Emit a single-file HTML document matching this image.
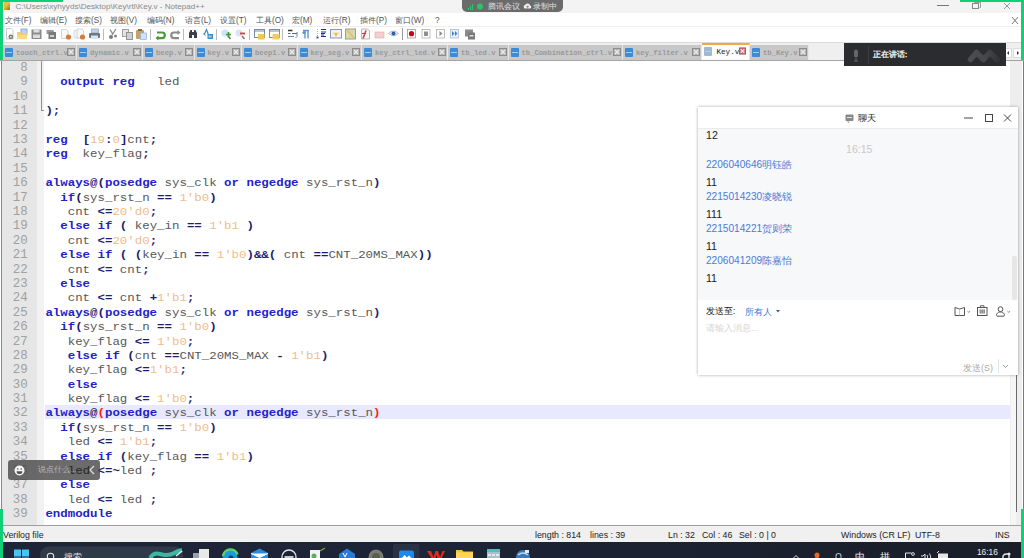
<!DOCTYPE html>
<html><head><meta charset="utf-8"><style>
*{margin:0;padding:0;box-sizing:border-box}
html,body{width:1024px;height:558px;overflow:hidden;background:#fff;position:relative;font-family:"Liberation Sans",sans-serif}
.a{position:absolute}
#title{left:0;top:0;width:1024px;height:13px;background:#f3f3f3}
#title .t{left:15.5px;top:1px;font-size:8.1px;color:#8a8a8a;white-space:nowrap;line-height:11px}
#menu{left:0;top:13px;width:1024px;height:14px;background:#fff;border-bottom:1px solid #eeeeee}
#menu span{position:absolute;top:2.3px;font-size:8.2px;color:#555;line-height:12px;white-space:nowrap}
#tool{left:0;top:27px;width:1024px;height:15px;background:#fff}
#tabbar{left:0;top:42px;width:1024px;height:19px;background:#efefef;border-top:1px solid #dadada;border-bottom:1px solid #a4a4a4}
.tab{position:absolute;top:2px;height:15px;background:#c8c8c8;border-right:1px solid #e6e6e6}
.tab.act{background:#fcfcfc;top:0px;height:17px;border-top:2px solid #f0a848}
.tab span{position:absolute;left:13px;top:3.4px;font-family:"Liberation Mono",monospace;font-size:7.2px;font-weight:bold;color:#999;line-height:11px;white-space:nowrap}
.tab.act span{color:#222;top:2.4px;font-weight:normal;left:15px;font-size:7.6px}
.fi{position:absolute;left:2px;top:3px;width:8px;height:9px;background:#3c8ad8;border-radius:1px}
.fi:after{content:"";position:absolute;left:1px;top:4px;width:6px;height:1px;background:#a8d0f4}
.tab.act .fi{background:#a0b8d0;top:2px}
.cx{position:absolute;right:1px;top:3px;width:8px;height:8px}
.tab.act .cx{top:2px;right:3px;width:7px;height:8px}
#editor{left:0;top:61px;width:1024px;height:464px;background:#fff;overflow:hidden}
#margin{left:1px;top:0;width:36px;height:464px;background:#e6e6e6;border-left:1px solid #888}
#fold{left:37px;top:0;width:7px;height:464px;background:#f2f2f2}
.ln,.num{position:absolute;height:14.39px;line-height:14.39px;font-family:"Liberation Mono",monospace;font-size:12.42px;white-space:pre}
.ln{left:45.4px;color:#575757;width:965px}
.cur{position:absolute;left:45px;width:964.5px;height:14.1px;background:#e8e8ff}
.ln{transform:scaleY(.86);transform-origin:0 10.48px}
.num{transform:translateY(-.4px)}
.num{left:0;width:25.6px;text-align:right;color:#a0a0a0}
.ln k{color:#2222c8;font-weight:bold}
.ln o{color:#1c1c70;font-weight:bold}
.ln n{color:#efbc8e}
.ln b{color:#ff2000;font-weight:bold}
#status{left:0;top:525px;width:1024px;height:17px;background:#f0f0f0;border-top:1px solid #a0a0a0}
#status span{position:absolute;top:2.5px;font-size:8.8px;color:#222;line-height:12px;white-space:nowrap}
#taskbar{left:0;top:542px;width:1024px;height:16px;background:linear-gradient(90deg,#1f2538 0%,#1c2436 40%,#1b2130 70%,#1a1e28 100%)}
.ticon{left:4px;top:2px;width:6px;height:8px;background:linear-gradient(135deg,#e8c040 40%,#a07020)}
#chat{left:698px;top:107px;width:320px;height:268px;background:#fff;box-shadow:0 0 3px rgba(0,0,0,.35)}
#chattitle{left:0;top:0;width:320px;height:22px;background:#fff;border-bottom:1px solid #ececec}
#msgs{left:0;top:22px;width:320px;height:171px;background:#f7f8fa}
.m{position:absolute;left:8px;font-size:10.6px;line-height:12px;white-space:nowrap}
.m.bl{color:#4a7ad8;font-size:10.1px}
#inp{left:0;top:193px;width:320px;height:75px;background:#fff}
#speak{left:843.5px;top:42.5px;width:162.5px;height:23.3px;background:#2a2c2f}
#pill{left:462px;top:0;width:101px;height:12px;background:#6b6b6b;border-radius:0 0 5px 5px}
#say{left:8px;top:460px;width:92px;height:19.5px;background:rgba(75,75,75,.82);border-radius:3px}

</style></head><body>
<div id="title" class="a"><div class="a ticon"></div><div class="a t">C:\Users\xyhyyds\Desktop\Key\rtl\Key.v - Notepad++</div>
<svg class="a" style="left:930px;top:0" width="90" height="13" viewBox="0 0 90 13"><path d="M7 5.5h12" stroke="#777" stroke-width="1"/><rect x="42.5" y="3.5" width="6" height="5" fill="none" stroke="#888" stroke-width="1"/><path d="M44.5 3.5v-1h6v5h-1" fill="none" stroke="#888" stroke-width=".8"/><path d="M74 3l6 6M80 3l-6 6" stroke="#999" stroke-width="1"/></svg>
</div>
<div id="menu" class="a">
<span style="left:5px">文件(F)</span><span style="left:40px">编辑(E)</span><span style="left:75px">搜索(S)</span><span style="left:110px">视图(V)</span><span style="left:147px">编码(N)</span><span style="left:185px">语言(L)</span><span style="left:220px">设置(T)</span><span style="left:256px">工具(O)</span><span style="left:292px">宏(M)</span><span style="left:323px">运行(R)</span><span style="left:360px">插件(P)</span><span style="left:395px">窗口(W)</span><span style="left:435px">?</span>
<svg class="a" style="left:1010px;top:3px" width="10" height="9"><path d="M2 1l6 7M8 1l-6 7" stroke="#777" stroke-width="1"/></svg>
</div>
<div id="tool" class="a"><svg class="a" style="left:0;top:-27px" width="480" height="44" viewBox="0 0 480 44">
<!-- new -->
<path d="M6.5 28.5h4.5l2 2v8.5h-6.5z" fill="#fff" stroke="#c8c8c8" stroke-width="1"/>
<circle cx="10.8" cy="36.8" r="2.3" fill="#6a7a5a"/><circle cx="10.8" cy="36.8" r="1" fill="#dfe8d0"/>
<!-- open -->
<rect x="21" y="29" width="6" height="6" fill="#b8d4f0" stroke="#7aa0d0" stroke-width=".8"/>
<path d="M17 32h4l1 1h5v6h-10z" fill="#f0cc70"/><path d="M17 35h10v4h-10z" fill="#f6d98a"/>
<!-- save -->
<rect x="31.5" y="29.5" width="10" height="9.5" fill="#8a8a8a"/><rect x="33.5" y="29.5" width="6" height="3" fill="#e0e0e0"/><rect x="33" y="34.5" width="7" height="3.5" fill="#dcdcdc"/>
<!-- save all -->
<path d="M46.5 30h6.5l1 1v3h-7.5z" fill="#9a9a9a"/><path d="M48.5 32h7.5v7h-7.5z" fill="#7a7a7a"/><rect x="50" y="35" width="4" height="2" fill="#cfcfcf"/>
<!-- close -->
<path d="M61.5 29.5h5l1.5 1.5v7.5h-6.5z" fill="#f8f8f8" stroke="#ccc" stroke-width=".8"/><circle cx="68.5" cy="37" r="2.6" fill="#d67a3a"/>
<!-- close all -->
<path d="M74 30.5h5v7.5h-5z" fill="#eef4fa" stroke="#cfd8e0" stroke-width=".8"/><path d="M77 29h5l1.5 1.5v7.5h-6.5z" fill="#f8f8f8" stroke="#ccc" stroke-width=".8"/><circle cx="82.5" cy="37" r="2.6" fill="#d67a3a"/>
<!-- print -->
<rect x="91.5" y="29" width="7" height="4" fill="#c0d4e6" stroke="#8aa0b8" stroke-width=".7"/><rect x="89" y="33" width="11" height="5" rx="1" fill="#6c7886"/><rect x="91" y="35.5" width="7" height="3.5" fill="#d8e4ef"/>
<path d="M103.5 29v11" stroke="#bbb" stroke-width="1"/>
<!-- cut -->
<path d="M116 29l-4 6M110 29.5l3 5" stroke="#888" stroke-width="1.3"/><circle cx="111" cy="37" r="2" fill="#7a7a7a"/><circle cx="115.5" cy="36" r="1.6" fill="#8a8a8a"/>
<!-- copy -->
<rect x="122.5" y="29.5" width="6" height="7" fill="#e4e4e4" stroke="#999" stroke-width=".9"/><rect x="126.5" y="32.5" width="6" height="7" fill="#d0d0d0" stroke="#8a8a8a" stroke-width=".9"/>
<!-- paste -->
<rect x="136" y="30" width="8" height="9" rx="1" fill="#c8a060"/><rect x="138" y="29" width="4" height="2" fill="#8a6a3a"/><rect x="140.5" y="33" width="6" height="6.5" fill="#cfe2f6" stroke="#8ab0d8" stroke-width=".7"/>
<path d="M150.5 29v11" stroke="#bbb" stroke-width="1"/>
<!-- undo -->
<path d="M157 32.5h5a2.8 2.8 0 0 1 0 5.6h-5" fill="none" stroke="#4a9a3a" stroke-width="2.2"/><path d="M155.5 38l3-2.5v5z" fill="#4a9a3a"/>
<!-- redo -->
<path d="M179 32.5h-5a2.8 2.8 0 0 0 0 5.6h5" fill="none" stroke="#8a8a8a" stroke-width="2.2"/><path d="M180.5 32.5l-3-2.5v5z" fill="#8a8a8a"/>
<path d="M183.5 29v11" stroke="#bbb" stroke-width="1"/>
<!-- find -->
<path d="M189 33l1.5-3h1.5v8h-3z M197 33l-1.5-3h-1.5v8h3z" fill="#3a3f48"/><rect x="191.5" y="32" width="3" height="3" fill="#3a3f48"/>
<!-- replace -->
<path d="M204 35l2.5-5.5 2 5.5" fill="none" stroke="#3a8ac8" stroke-width="1.2"/><rect x="207.5" y="34" width="5.5" height="5" fill="#3a90d0"/><rect x="208.5" y="35.5" width="3" height="2" fill="#a0d0f0"/><path d="M203.5 33.5l2 1.5" stroke="#3a9a6a" stroke-width="1"/>
<path d="M216.5 29v11" stroke="#bbb" stroke-width="1"/>
<!-- zoom in -->
<circle cx="225" cy="33" r="3.6" fill="#cfe4f4"/><path d="M228 36l2.5 3" stroke="#4a7a4a" stroke-width="1.4"/><path d="M226 34.5h5M228.5 32v5" stroke="#3a9a3a" stroke-width="1.6"/>
<!-- zoom out -->
<circle cx="239" cy="33" r="3.6" fill="#d6e6f4"/><path d="M242 36l2.5 3" stroke="#8a6a6a" stroke-width="1.4"/><path d="M240 33.5h5" stroke="#d84a4a" stroke-width="2"/>
<path d="M249.5 29v11" stroke="#bbb" stroke-width="1"/>
<!-- sync v -->
<rect x="254.5" y="29.5" width="10" height="8" fill="#fff" stroke="#7a88a8" stroke-width="1"/><path d="M254.5 31h10" stroke="#7a88a8" stroke-width="1"/><rect x="258" y="34" width="6.5" height="5.5" fill="#f0c850"/>
<!-- sync h -->
<rect x="269.5" y="29.5" width="10" height="8" fill="#fff" stroke="#7a88a8" stroke-width="1"/><path d="M269.5 31h10" stroke="#7a88a8" stroke-width="1"/><rect x="272.5" y="34" width="7" height="5.5" fill="#f2cc60"/>
<path d="M282.5 29v11" stroke="#bbb" stroke-width="1"/>
<!-- wrap -->
<path d="M288 30.5h4.5" stroke="#333" stroke-width="1.5"/><path d="M288 33.5h2.5M292 33.5h5" stroke="#555" stroke-width=".9"/><path d="M288 36.5h6" stroke="#6a8ab0" stroke-width="1"/><path d="M297 32v4.5l-1.5 1.5" fill="none" stroke="#6a8ab0" stroke-width="1"/>
<!-- pilcrow -->
<path d="M305 30.5v8M308 30.5v8" stroke="#5a94d0" stroke-width="1.4"/><path d="M303 30.5h6" stroke="#5a94d0" stroke-width="1.4"/><circle cx="304" cy="32.5" r="1.6" fill="#5a94d0"/>
<!-- indent guide -->
<path d="M317.5 29v10" stroke="#9090d0" stroke-width=".8" stroke-dasharray="1 1"/><path d="M321 29.5h5M321 32h5M321 33.5h4M321 35h3M321 36.5h5" stroke="#1a2ad0" stroke-width="1"/><rect x="316.5" y="36.5" width="2" height="2" fill="#4a4aa0"/>
<!-- udl -->
<rect x="330.5" y="29.5" width="11" height="8.5" fill="#f0f0f8" stroke="#8898b8" stroke-width="1"/><rect x="332" y="32" width="8" height="2" fill="#f4e8c8"/><path d="M334 33l2 4 2-4z" fill="#e8c040"/>
<!-- doc map -->
<rect x="345.5" y="29" width="10" height="10" fill="#d8d8a8" stroke="#9aa090" stroke-width="1"/><path d="M347 30l7 8" stroke="#d8c070" stroke-width="1.5"/>
<!-- function list -->
<path d="M361.5 29h6l2 2v8h-8z" fill="#fcf4f4" stroke="#aaa" stroke-width=".8"/><path d="M366 30.5l-3 8" stroke="#b84a4a" stroke-width="1.6"/><path d="M362 33.5h4" stroke="#b84a4a" stroke-width="1"/>
<!-- folder -->
<rect x="375" y="32" width="9" height="6" fill="#f2d0d0" stroke="#e0a8a8" stroke-width=".6"/>
<!-- monitor eye -->
<path d="M388.5 33.5q5-5 10 0q-5 4.5-10 0z" fill="#e8eef4" stroke="#9aa8b8" stroke-width=".7"/><circle cx="393.5" cy="33.5" r="2" fill="#3a5aa8"/>
<path d="M402.5 28v12" stroke="#999" stroke-width="1"/>
<!-- record -->
<rect x="407.5" y="29.5" width="8" height="8.5" fill="#fff" stroke="#999" stroke-width=".8"/><circle cx="411.5" cy="33.7" r="2.6" fill="#c8001a"/>
<!-- stop -->
<rect x="422" y="29.5" width="8" height="8.5" fill="#fff" stroke="#b0b0b0" stroke-width=".8"/><rect x="424" y="31.5" width="4" height="4.5" fill="#909090"/>
<!-- play -->
<rect x="436.5" y="29.5" width="8" height="8.5" fill="#fff" stroke="#b0b0b0" stroke-width=".8"/><path d="M439.5 31v5l3-2.5z" fill="#888"/>
<!-- play multi -->
<rect x="450.5" y="29.5" width="8" height="8.5" fill="#e8f0fa" stroke="#b0b8c8" stroke-width=".8"/><path d="M452 31v5l2.5-2.5z M455 31v5l2.5-2.5z" fill="#3a7ad8"/>
<!-- save macro -->
<rect x="465" y="29.5" width="8" height="7" fill="#8c8c8c"/><rect x="468" y="32.5" width="7" height="7" fill="#7a7a7a"/><rect x="469.5" y="35" width="4" height="1.5" fill="#ddd"/>
</svg>
</div>
<div id="tabbar" class="a"><div class="tab" style="left:3px;width:74px"><i class="fi"></i><span>touch_ctrl.v</span><svg class="cx" width="8" height="8" viewBox="0 0 8 8"><rect x=".5" y=".5" width="7" height="7" fill="#b4b4b4" stroke="#8c8c8c" stroke-width="1"/><path d="M2 2l4 4M6 2l-4 4" stroke="#ececec" stroke-width="1.2"/></svg></div>
<div class="tab" style="left:77px;width:66px"><i class="fi"></i><span>dynamic.v</span><svg class="cx" width="8" height="8" viewBox="0 0 8 8"><rect x=".5" y=".5" width="7" height="7" fill="#b4b4b4" stroke="#8c8c8c" stroke-width="1"/><path d="M2 2l4 4M6 2l-4 4" stroke="#ececec" stroke-width="1.2"/></svg></div>
<div class="tab" style="left:143px;width:51.5px"><i class="fi"></i><span>beep.v</span><svg class="cx" width="8" height="8" viewBox="0 0 8 8"><rect x=".5" y=".5" width="7" height="7" fill="#b4b4b4" stroke="#8c8c8c" stroke-width="1"/><path d="M2 2l4 4M6 2l-4 4" stroke="#ececec" stroke-width="1.2"/></svg></div>
<div class="tab" style="left:194.5px;width:47.5px"><i class="fi"></i><span>key.v</span><svg class="cx" width="8" height="8" viewBox="0 0 8 8"><rect x=".5" y=".5" width="7" height="7" fill="#b4b4b4" stroke="#8c8c8c" stroke-width="1"/><path d="M2 2l4 4M6 2l-4 4" stroke="#ececec" stroke-width="1.2"/></svg></div>
<div class="tab" style="left:242px;width:55.5px"><i class="fi"></i><span>beep1.v</span><svg class="cx" width="8" height="8" viewBox="0 0 8 8"><rect x=".5" y=".5" width="7" height="7" fill="#b4b4b4" stroke="#8c8c8c" stroke-width="1"/><path d="M2 2l4 4M6 2l-4 4" stroke="#ececec" stroke-width="1.2"/></svg></div>
<div class="tab" style="left:297.5px;width:64.5px"><i class="fi"></i><span>key_seg.v</span><svg class="cx" width="8" height="8" viewBox="0 0 8 8"><rect x=".5" y=".5" width="7" height="7" fill="#b4b4b4" stroke="#8c8c8c" stroke-width="1"/><path d="M2 2l4 4M6 2l-4 4" stroke="#ececec" stroke-width="1.2"/></svg></div>
<div class="tab" style="left:362px;width:86px"><i class="fi"></i><span>key_ctrl_led.v</span><svg class="cx" width="8" height="8" viewBox="0 0 8 8"><rect x=".5" y=".5" width="7" height="7" fill="#b4b4b4" stroke="#8c8c8c" stroke-width="1"/><path d="M2 2l4 4M6 2l-4 4" stroke="#ececec" stroke-width="1.2"/></svg></div>
<div class="tab" style="left:448px;width:60.5px"><i class="fi"></i><span>tb_led.v</span><svg class="cx" width="8" height="8" viewBox="0 0 8 8"><rect x=".5" y=".5" width="7" height="7" fill="#b4b4b4" stroke="#8c8c8c" stroke-width="1"/><path d="M2 2l4 4M6 2l-4 4" stroke="#ececec" stroke-width="1.2"/></svg></div>
<div class="tab" style="left:508.5px;width:114.5px"><i class="fi"></i><span>tb_Combination_ctrl.v</span><svg class="cx" width="8" height="8" viewBox="0 0 8 8"><rect x=".5" y=".5" width="7" height="7" fill="#b4b4b4" stroke="#8c8c8c" stroke-width="1"/><path d="M2 2l4 4M6 2l-4 4" stroke="#ececec" stroke-width="1.2"/></svg></div>
<div class="tab" style="left:623px;width:78.5px"><i class="fi"></i><span>key_filter.v</span><svg class="cx" width="8" height="8" viewBox="0 0 8 8"><rect x=".5" y=".5" width="7" height="7" fill="#b4b4b4" stroke="#8c8c8c" stroke-width="1"/><path d="M2 2l4 4M6 2l-4 4" stroke="#ececec" stroke-width="1.2"/></svg></div>
<div class="tab act" style="left:701.5px;width:48.5px"><i class="fi"></i><span>Key.v</span><svg class="cx" width="8" height="8" viewBox="0 0 8 8"><rect x=".5" y=".5" width="7" height="7" fill="#d87888" stroke="#a04858" stroke-width="1"/><path d="M2 2l4 4M6 2l-4 4" stroke="#fff" stroke-width="1.2"/></svg></div>
<div class="tab" style="left:750px;width:59px"><i class="fi"></i><span>tb_Key.v</span><svg class="cx" width="8" height="8" viewBox="0 0 8 8"><rect x=".5" y=".5" width="7" height="7" fill="#b4b4b4" stroke="#8c8c8c" stroke-width="1"/><path d="M2 2l4 4M6 2l-4 4" stroke="#ececec" stroke-width="1.2"/></svg></div>
<div class="a" style="left:1003px;top:5px;width:9px;height:10px;background:#fff;border:1px solid #ddd"></div><div class="a" style="left:1013px;top:5px;width:9px;height:10px;background:#fff;border:1px solid #ddd"></div>
<svg class="a" style="left:1003px;top:5px" width="20" height="10"><path d="M6 3l-2 2 2 2z M14 3l2 2-2 2z" fill="#333"/></svg>
</div>
<div id="editor" class="a">
<div id="margin" class="a"><div class="num" style="top:0.10px">8</div>
<div class="num" style="top:14.49px">9</div>
<div class="num" style="top:28.88px">10</div>
<div class="num" style="top:43.27px">11</div>
<div class="num" style="top:57.66px">12</div>
<div class="num" style="top:72.05px">13</div>
<div class="num" style="top:86.44px">14</div>
<div class="num" style="top:100.83px">15</div>
<div class="num" style="top:115.22px">16</div>
<div class="num" style="top:129.61px">17</div>
<div class="num" style="top:144.00px">18</div>
<div class="num" style="top:158.39px">19</div>
<div class="num" style="top:172.78px">20</div>
<div class="num" style="top:187.17px">21</div>
<div class="num" style="top:201.56px">22</div>
<div class="num" style="top:215.95px">23</div>
<div class="num" style="top:230.34px">24</div>
<div class="num" style="top:244.73px">25</div>
<div class="num" style="top:259.12px">26</div>
<div class="num" style="top:273.51px">27</div>
<div class="num" style="top:287.90px">28</div>
<div class="num" style="top:302.29px">29</div>
<div class="num" style="top:316.68px">30</div>
<div class="num" style="top:331.07px">31</div>
<div class="num" style="top:345.46px">32</div>
<div class="num" style="top:359.85px">33</div>
<div class="num" style="top:374.24px">34</div>
<div class="num" style="top:388.63px">35</div>
<div class="num" style="top:403.02px">36</div>
<div class="num" style="top:417.41px">37</div>
<div class="num" style="top:431.80px">38</div>
<div class="num" style="top:446.19px">39</div></div>
<div id="fold" class="a"></div>
<div class="a" style="left:41px;top:0;width:1px;height:49px;background:#909090"></div>
<div class="a" style="left:41px;top:48.5px;width:3px;height:1px;background:#909090"></div>
<div class="ln" style="top:0.10px"></div>
<div class="ln" style="top:14.49px">  <k>output</k> <k>reg</k>   led</div>
<div class="ln" style="top:28.88px"></div>
<div class="ln" style="top:43.27px"><o>);</o></div>
<div class="ln" style="top:57.66px"></div>
<div class="ln" style="top:72.05px"><k>reg</k>  <o>[</o><n>19</n><o>:</o><n>0</n><o>]</o>cnt<o>;</o></div>
<div class="ln" style="top:86.44px"><k>reg</k>  key_flag<o>;</o></div>
<div class="ln" style="top:100.83px"></div>
<div class="ln" style="top:115.22px"><k>always</k><o>@(</o><k>posedge</k> sys_clk <k>or</k> <k>negedge</k> sys_rst_n<o>)</o></div>
<div class="ln" style="top:129.61px">  <k>if</k><o>(</o>sys_rst_n <o>==</o> <n>1'b0</n><o>)</o></div>
<div class="ln" style="top:144.00px">   cnt <o>&lt;=</o><n>20'd0</n><o>;</o></div>
<div class="ln" style="top:158.39px">  <k>else</k> <k>if</k> <o>(</o> key_in <o>==</o> <n>1'b1</n> <o>)</o></div>
<div class="ln" style="top:172.78px">   cnt <o>&lt;=</o><n>20'd0</n><o>;</o></div>
<div class="ln" style="top:187.17px">  <k>else</k> <k>if</k> <o>(</o> <o>(</o>key_in <o>==</o> <n>1'b0</n><o>)&amp;&amp;(</o> cnt <o>==</o>CNT_20MS_MAX<o>))</o></div>
<div class="ln" style="top:201.56px">   cnt <o>&lt;=</o> cnt<o>;</o></div>
<div class="ln" style="top:215.95px">  <k>else</k></div>
<div class="ln" style="top:230.34px">   cnt <o>&lt;=</o> cnt <o>+</o><n>1'b1</n><o>;</o></div>
<div class="ln" style="top:244.73px"><k>always</k><o>@(</o><k>posedge</k> sys_clk <k>or</k> <k>negedge</k> sys_rst_n<o>)</o></div>
<div class="ln" style="top:259.12px">  <k>if</k><o>(</o>sys_rst_n <o>==</o> <n>1'b0</n><o>)</o></div>
<div class="ln" style="top:273.51px">   key_flag <o>&lt;=</o> <n>1'b0</n><o>;</o></div>
<div class="ln" style="top:287.90px">   <k>else</k> <k>if</k> <o>(</o>cnt <o>==</o>CNT_20MS_MAX <o>-</o> <n>1'b1</n><o>)</o></div>
<div class="ln" style="top:302.29px">   key_flag <o>&lt;=</o><n>1'b1</n><o>;</o></div>
<div class="ln" style="top:316.68px">   <k>else</k></div>
<div class="ln" style="top:331.07px">   key_flag <o>&lt;=</o> <n>1'b0</n><o>;</o></div>
<div class="cur" style="top:344.1px"></div>
<div class="ln" style="top:345.46px"><k>always</k><o>@</o><b>(</b><k>posedge</k> sys_clk <k>or</k> <k>negedge</k> sys_rst_n<b>)</b></div>
<div class="ln" style="top:359.85px">  <k>if</k><o>(</o>sys_rst_n <o>==</o> <n>1'b0</n><o>)</o></div>
<div class="ln" style="top:374.24px">   led <o>&lt;=</o> <n>1'b1</n><o>;</o></div>
<div class="ln" style="top:388.63px">  <k>else</k> <k>if</k> <o>(</o>key_flag <o>==</o> <n>1'b1</n><o>)</o></div>
<div class="ln" style="top:403.02px">   led <o>&lt;=~</o>led <o>;</o></div>
<div class="ln" style="top:417.41px">  <k>else</k></div>
<div class="ln" style="top:431.80px">   led <o>&lt;=</o> led <o>;</o></div>
<div class="ln" style="top:446.19px"><k>endmodule</k></div>
<div class="a" style="left:1010.4px;top:0;width:12px;height:464px;background:#eeeeee"></div><div class="a" style="left:1011px;top:300px;width:4.5px;height:164px;background:#f6f6f6"></div><div class="a" style="left:1015.5px;top:300px;width:1.7px;height:151px;background:#6a6a6a"></div><div class="a" style="left:1022.5px;top:0;width:1.5px;height:464px;background:#7a7a7a"></div>
</div>
<div id="status" class="a"><span style="left:3px">Verilog file</span><span style="left:535px">length : 814</span><span style="left:590px">lines : 39</span><span style="left:668px">Ln : 32</span><span style="left:702px">Col : 46</span><span style="left:739px">Sel : 0 | 0</span><span style="left:841px">Windows (CR LF)</span><span style="left:915px">UTF-8</span><span style="left:995px">INS</span></div>
<div id="taskbar" class="a"><svg class="a" style="left:0;top:-542px" width="1024" height="558" viewBox="0 0 1024 558">
<!-- start -->
<rect x="14" y="549.5" width="7" height="7" fill="#4cc2f1"/><rect x="22" y="549.5" width="7" height="7" fill="#4cc2f1"/><rect x="14" y="557.5" width="7" height="2" fill="#4cc2f1"/><rect x="22" y="557.5" width="7" height="2" fill="#4cc2f1"/>
<!-- search box -->
<rect x="40" y="546.5" width="143" height="20" rx="8.5" fill="#2f3a48"/>
<circle cx="50.5" cy="556.5" r="3.2" fill="none" stroke="#e8e8e8" stroke-width="1.1"/><text x="63.5" y="560" font-size="9" fill="#d8dce0">搜索</text>
<path d="M150 558q4-6 10-4t12 0q6-3 10-4" stroke="#3bb8a2" stroke-width="4" fill="none"/><path d="M176 556l6-5" stroke="#dfe8f0" stroke-width="1.6"/>
<!-- task view -->
<rect x="199" y="549" width="10" height="9" fill="#e8e8e8"/><rect x="193" y="553" width="6" height="5" fill="#9aa0a8"/>
<!-- edge -->
<circle cx="230" cy="557" r="7.5" fill="#1a9ad8"/><path d="M223 556a7.5 7.5 0 0 1 14.5-1.5" stroke="#5fd068" stroke-width="2.5" fill="none"/><circle cx="231" cy="558" r="2.5" fill="#0a3a6a"/>
<!-- mail -->
<path d="M251 553l8.5-4.5 8.5 4.5v6h-17z" fill="#2a8ae0"/><path d="M251 553.5l8.5 4 8.5-4" fill="#fff" stroke="#fff" stroke-width="1"/>
<!-- dell -->
<circle cx="289" cy="557" r="7" fill="none" stroke="#e6e6e6" stroke-width="1.3"/><path d="M284.5 557h9" stroke="#dcdcdc" stroke-width="1.8"/>
<!-- app doc -->
<rect x="310" y="550" width="10" height="9" fill="#f2f2f2"/><circle cx="314" cy="556" r="2.5" fill="#5ab05a"/><path d="M320 551l5-3" stroke="#8aa04a" stroke-width="1.2"/>
<!-- VS -->
<path d="M339 554l8-5.5 8 5.5v5h-16z" fill="#2a7ad8"/><path d="M343 553l2 4 2-4" stroke="#fff" stroke-width="1" fill="none"/>
<!-- photo gray -->
<circle cx="376" cy="557" r="7.5" fill="#7a7e70"/><circle cx="376" cy="557" r="4" fill="#5a5e52"/>
<!-- tencent meeting tile -->
<rect x="393" y="544" width="26.5" height="16" rx="2" fill="#2a3346"/>
<rect x="399" y="550.5" width="15" height="9" rx="2" fill="#1a8af0"/><path d="M401 559l3.5-4 2.5 2.5 2-2 3.5 3.5z" fill="#fff"/>
<!-- wps -->
<path d="M427 551h4l2.5 6 2-6h2.5l2 6 2.5-6h2.5l-4 8h-3l-1.5-4-1.5 4h-3z" fill="#e8281e"/>
<!-- folder -->
<path d="M456 550h6l1.5 1.5h9.5v7.5h-17z" fill="#f4c430"/><rect x="456" y="552.5" width="17" height="7" fill="#ffd659"/>
<!-- calc -->
<rect x="487" y="549" width="13" height="10" fill="#a8c0c8"/><rect x="487" y="549" width="13" height="3" fill="#5ab8c0"/><rect x="488" y="554" width="3" height="2" fill="#e0e8ea"/><rect x="492" y="554" width="3" height="2" fill="#e0e8ea"/><rect x="496" y="554" width="3" height="2" fill="#e0e8ea"/>
<!-- globe -->
<circle cx="523" cy="557" r="7" fill="#3a78b8"/><path d="M518 555q5-4 10 0" stroke="#b8d8f0" stroke-width="1.5" fill="none"/><rect x="525" y="550" width="4" height="3" fill="#dfefff"/>
<!-- tray -->
<path d="M793.5 558l2.5-2.5 2.5 2.5" stroke="#ddd" stroke-width="1" fill="none"/>
<circle cx="817" cy="555" r="2.5" fill="#e06a2a"/><path d="M813 559q4-4 8 0" fill="#e06a2a"/>
<path d="M836 559v-3a2.5 2.5 0 0 1 5 0v3" stroke="#a8b8c8" stroke-width="1.1" fill="none"/>
<text x="854.5" y="559.5" font-size="9.5" fill="#e6e6e6">中</text>
<text x="880" y="559.5" font-size="9.5" fill="#e6e6e6">拼</text>
<path d="M905.5 559v-6h6" stroke="#e6e6e6" stroke-width="1" fill="none"/><circle cx="913" cy="554" r="1.4" fill="none" stroke="#e6e6e6" stroke-width=".9"/>
<path d="M921 556h2l2-2v5" stroke="#e6e6e6" stroke-width="1" fill="none"/><path d="M927 555q1.5 2 0 4M929.5 553.5q2.5 3.5 0 7" stroke="#e6e6e6" stroke-width=".9" fill="none"/>
<rect x="938" y="553.5" width="10" height="6" fill="#e6e6e6"/><path d="M937 553l2-2" stroke="#e6e6e6" stroke-width="1"/>
<text x="977" y="555.3" font-size="8.3" fill="#f0f0f0" font-family="Liberation Sans">16:16</text>
<path d="M1003 559v-3q1-2 3-2h3v5" stroke="#e6e6e6" stroke-width="1.4" fill="none"/><circle cx="1009" cy="554" r="1.5" fill="#e6e6e6"/>
</svg>
</div>

<!-- chat window -->
<div id="chat" class="a">
 <div class="a" id="chattitle"><svg class="a" style="left:147px;top:7px" width="9" height="9"><rect x="0.5" y="0.5" width="8" height="6.5" rx="1" fill="#888"/><path d="M2 7.5l1.5 1.5 1-1.5z" fill="#888"/><path d="M2 3.5h5" stroke="#fff" stroke-width=".8"/></svg><span class="a" style="left:159.5px;top:5.5px;font-size:8.6px;color:#222;line-height:11px">聊天</span>
 <svg class="a" style="left:264px;top:5px" width="60" height="12"><path d="M2 6h9" stroke="#444" stroke-width="1"/><rect x="23.5" y="2.5" width="7" height="7" fill="none" stroke="#444" stroke-width="1"/><path d="M42 2.5l7 7M49 2.5l-7 7" stroke="#444" stroke-width="1"/></svg>
 </div>
 <div class="a" id="msgs">
  <div class="m" style="top:0px;color:#222">12</div>
  <div class="m" style="top:14px;left:148px;color:#c8c8c8">16:15</div>
  <div class="m bl" style="top:30px">2206040646明钰皓</div>
  <div class="m" style="top:47px;color:#222">11</div>
  <div class="m bl" style="top:62px">2215014230凌晓锐</div>
  <div class="m" style="top:79px;color:#222">111</div>
  <div class="m bl" style="top:94px">2215014221贺则荣</div>
  <div class="m" style="top:111px;color:#222">11</div>
  <div class="m bl" style="top:126px">2206041209陈嘉怡</div>
  <div class="m" style="top:143px;color:#222">11</div>
  <div class="a" style="left:314px;top:127px;width:5px;height:44px;background:#e6e6e6;border-radius:2px"></div>
 </div>
 <div class="a" id="inp">
  <span class="a" style="left:8px;top:6px;font-size:8.5px;color:#222;line-height:11px">发送至:</span>
  <span class="a" style="left:46.5px;top:6px;font-size:9.1px;color:#3a76dc;line-height:12px">所有人</span>
  <svg class="a" style="left:78px;top:9.5px" width="4" height="3"><path d="M0 0h4l-2 2.6z" fill="#3a5a90"/></svg>
  <svg class="a" style="left:255px;top:4px" width="64" height="14"><path d="M2 3.5l4.5 1.5 5-1.5v8h-9.5z" fill="none" stroke="#555" stroke-width="1"/><path d="M6.5 5v6.5" stroke="#aaa" stroke-width=".6"/><path d="M14.5 7.2l1.3 1.1 1.3-1.1" fill="none" stroke="#666" stroke-width=".8"/><rect x="24.5" y="3.5" width="9.5" height="8" fill="none" stroke="#555" stroke-width="1"/><path d="M27.5 3.2v-1.5h3.5v1.5" fill="none" stroke="#555" stroke-width=".9"/><rect x="26.5" y="5.5" width="5.5" height="4" fill="#8a8a8a"/><path d="M28.2 5.5v4M30.3 5.5v4" stroke="#e0e0e0" stroke-width=".5"/><circle cx="47.5" cy="5.2" r="2.4" fill="none" stroke="#555" stroke-width="1"/><path d="M44 12.2c-1.2-1.5 0-4.2 3.5-4.2s4.7 2.7 3.5 4.2z" fill="none" stroke="#555" stroke-width="1"/><path d="M54.5 7.2l1.3 1.1 1.3-1.1" fill="none" stroke="#666" stroke-width=".8"/></svg>
  <span class="a" style="left:8px;top:22px;font-size:8.8px;color:#d6d6d6;line-height:12px">请输入消息...</span>
  <span class="a" style="left:265px;top:61.5px;font-size:8.9px;color:#aaa;line-height:12px">发送(S)</span>
  <div class="a" style="left:300px;top:59px;width:1px;height:14px;background:#e4e4e4"></div>
  <svg class="a" style="left:304px;top:64px" width="7" height="5"><path d="M1 1l2.5 2.5 2.5-2.5" fill="none" stroke="#999" stroke-width=".9"/></svg>
 </div>
</div>

<!-- speaking overlay -->
<div id="speak" class="a">
 <svg class="a" style="left:8px;top:6px" width="8" height="13"><rect x="2" y="0.5" width="4" height="8" rx="2" fill="#666"/><path d="M4 9v3M2 12h4" stroke="#666" stroke-width="1"/></svg>
 <div class="a" style="left:24px;top:3px;width:1px;height:18px;background:#3c3e42"></div>
 <span class="a" style="left:29.5px;top:6.8px;font-size:8.1px;color:#f2f2f2;line-height:12px;-webkit-text-stroke:.3px #f2f2f2">正在讲话:</span>
 <svg class="a" style="left:122px;top:2px" width="40" height="21"><defs><linearGradient id="dg" x1="0" x2="1"><stop offset="0" stop-color="#4a4c50"/><stop offset=".6" stop-color="#45474b"/><stop offset="1" stop-color="#34363a"/></linearGradient></defs><path d="M4.5 14.5L10.5 7.5L17.5 14.5L24 7.5L31 14.5" fill="none" stroke="url(#dg)" stroke-width="5.5" stroke-linejoin="round" stroke-linecap="round"/></svg>
</div>

<!-- tencent meeting pill -->
<div id="pill" class="a">
 <svg class="a" style="left:5px;top:2px" width="20" height="9"><path d="M1.5 8v-2M3.5 8v-4M5.5 8v-6" stroke="#2ac46a" stroke-width="1.2"/><circle cx="13" cy="4.5" r="3" fill="#2ac46a"/></svg>
 <span class="a" style="left:26px;top:0.8px;font-size:8px;color:#e0e0e0;line-height:11px">腾讯会议</span>
 <svg class="a" style="left:61px;top:2px" width="10" height="8"><path d="M1.5 6.5a2 2 0 0 1 .5-3.5a2.8 2.8 0 0 1 5.2 .5a1.6 1.6 0 0 1 0 3z" fill="#eee"/><path d="M4.6 6.5v-2.5M3.4 5l1.2-1.2 1.2 1.2" stroke="#777" stroke-width=".8" fill="none"/></svg>
 <span class="a" style="left:71px;top:0.8px;font-size:8px;color:#e0e0e0;line-height:11px">录制中</span>
</div>

<!-- say something overlay -->
<div id="say" class="a">
 <svg class="a" style="left:6px;top:5px" width="11" height="11"><circle cx="5.5" cy="5.5" r="5" fill="#f4f4f4"/><circle cx="3.8" cy="4" r=".8" fill="#555"/><circle cx="7.2" cy="4" r=".8" fill="#555"/><path d="M2.6 6.2h5.8a2.9 2.9 0 0 1-5.8 0z" fill="#555"/></svg>
 <div class="a" style="left:22px;top:3px;width:1px;height:13px;background:#6a6a6a"></div>
 <span class="a" style="left:30px;top:4px;font-size:8.4px;color:#bbb;line-height:11px">说点什么...</span>
 <svg class="a" style="left:80px;top:5px" width="8" height="10"><path d="M6 1l-4 4 4 4" fill="none" stroke="#ddd" stroke-width="1.3"/></svg>
</div>

<div class="a" style="left:67.75px;top:464.02px;height:14.39px;line-height:14.39px;font-family:'Liberation Mono',monospace;font-size:12.42px;color:rgba(30,30,30,.75);transform:scaleY(.86);transform-origin:0 10.48px;white-space:pre">led</div>
<!-- green share border -->
<div class="a" style="left:0;top:0;width:63px;height:2px;background:#0fcf78"></div>
<div class="a" style="left:0;top:0;width:3px;height:60px;background:#0fcf78"></div>
<div class="a" style="left:960px;top:0;width:64px;height:2px;background:#0fcf78"></div>
<div class="a" style="left:1021px;top:0;width:3px;height:60px;background:#0fcf78"></div>
<div class="a" style="left:0;top:509px;width:3px;height:49px;background:#0fcf78"></div>
<div class="a" style="left:1021px;top:509px;width:3px;height:49px;background:#0fcf78"></div>

</body></html>
